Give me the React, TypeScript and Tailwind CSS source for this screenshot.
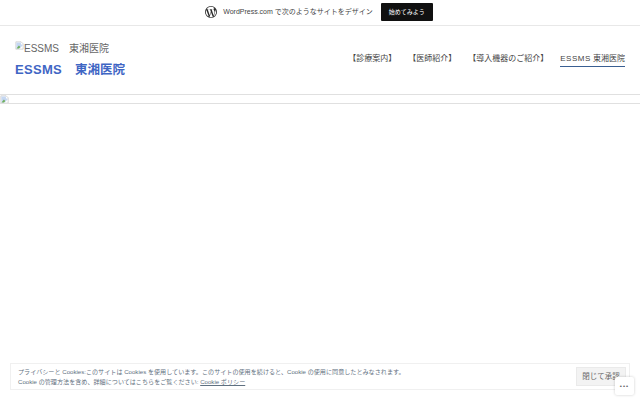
const font = "[font-family:'Liberation_Sans','Noto_Sans_CJK_JP',sans-serif]";

function BrokenImage() {
  return (
    <svg width="9" height="9" viewBox="0 0 16 16" className="shrink-0">
      <path d="M1.5 1.5H11L14.5 5V14.5H1.5Z" fill="#fff" stroke="#b5b5b5" />
      <path d="M2.5 2.5H10.5V6H13.5V8L8 13.5H2.5Z" fill="#c5d7f2" />
      <path d="M3 13L7 8L9.5 10.5L7 13.5H3Z" fill="#6fae5c" />
    </svg>
  );
}

function WpLogo() {
  return (
    <svg width="12" height="12" viewBox="0 0 24 24" className="block h-3 w-3 fill-[#2a2a2a]">
      <path d="M12 0a12 12 0 1 0 0 24 12 12 0 0 0 0-24ZM1.7 12c0-1.5.3-2.9.9-4.2l4.9 13.4A10.3 10.3 0 0 1 1.7 12Zm10.3 10.3c-1 0-2-.1-2.9-.4l3.1-9 3.2 8.7v.2c-1.1.3-2.2.5-3.4.5Zm1.4-15.1c.6 0 1.2-.1 1.2-.1.5-.1.5-.9 0-.8 0 0-1.7.1-2.8.1-1 0-2.7-.1-2.7-.1-.6-.1-.6.8-.1.8 0 0 .6.1 1.1.1l1.6 4.5-2.3 6.8-3.8-11.3c.6 0 1.2-.1 1.2-.1.5-.1.5-.9-.1-.8 0 0-1.7.1-2.8.1h-.7A10.3 10.3 0 0 1 19 4.4h-.1c-1 0-1.8.9-1.8 1.9 0 .9.5 1.6 1.1 2.5.4.7.9 1.7.9 3 0 .9-.3 2-.8 3.4l-1.1 3.6-3.8-11.6Zm3.8 13.7 3.1-9c.6-1.5.8-2.7.8-3.7 0-.4 0-.8-.1-1.1a10.3 10.3 0 0 1-3.8 13.8Z" />
    </svg>
  );
}

const navItems = ["【診療案内】", "【医師紹介】", "【導入機器のご紹介】"];

export default function App() {
  return (
    <div className={`relative flex h-[400px] w-[640px] flex-col overflow-hidden bg-white ${font}`}>
      <div className="flex h-[26px] shrink-0 items-center justify-center border-b border-[#e8e8e8] bg-white pb-[1px] pr-[2px]">
        <span className="mr-[6px]"><WpLogo /></span>
        <span className="text-[7px] text-[#444]">WordPress.com で次のようなサイトをデザイン</span>
        <span className="ml-2 flex h-[18px] w-[52px] items-center justify-center rounded-[1px] bg-[#101010] text-[6px] text-white">始めてみよう</span>
      </div>

      <header className="flex h-[68px] shrink-0 items-start justify-between px-[15px]">
        <div className="pt-[15px]">
          <div className="flex h-[15px] items-start text-[10px] leading-[14px] text-[#666]">
            <BrokenImage />
            <span className="mt-[1px] whitespace-pre">ESSMS　東湘医院</span>
          </div>
          <div className="mt-[5px] whitespace-pre text-[13px] font-bold leading-[18px] text-[#3f66c4]">
            <span className="tracking-[0.3px]">ESSMS</span>　<span className="text-[12.5px]">東湘医院</span>
          </div>
        </div>
        <nav className="flex items-start gap-[12px] pt-[26px] text-[8px] text-[#444]">
          {navItems.map((item) => (
            <span key={item} className="leading-[13px]">{item}</span>
          ))}
          <span className="border-b border-[#3a5f92] pb-[1px] leading-[13px]">
            <span className="tracking-[0.5px]">ESSMS</span> 東湘医院
          </span>
        </nav>
      </header>

      <div className="h-[10px] w-full shrink-0 overflow-hidden border-y border-[#e0e0e0]">
        <BrokenImage />
      </div>

      <div className="absolute bottom-[10px] left-[10px] flex h-[27px] w-[620px] items-center justify-between border border-[#f0f0f0] bg-white pl-[7px] pr-[3px]">
        <p className="text-[6.1px] leading-[10px] text-[#5f7080]">
          プライバシーと Cookies:このサイトは Cookies を使用しています。このサイトの使用を続けると、Cookie の使用に同意したとみなされます。
          <br />
          Cookie の管理方法を含め、詳細についてはこちらをご覧ください: <span className="underline">Cookie ポリシー</span>
        </p>
        <span className="flex h-[19px] w-[50px] items-center justify-center border border-[#eaeaea] bg-[#f3f3f3] text-[7.5px] text-[#666]">閉じて承認</span>
      </div>

      <div className="absolute bottom-[5px] right-[6px] flex h-[18px] w-[19px] items-center justify-center rounded-[2px] bg-white text-[6px] font-bold leading-none tracking-[1px] text-[#666] shadow-[0_0_3px_rgba(0,0,0,0.2)]">
        •••
      </div>
    </div>
  );
}
